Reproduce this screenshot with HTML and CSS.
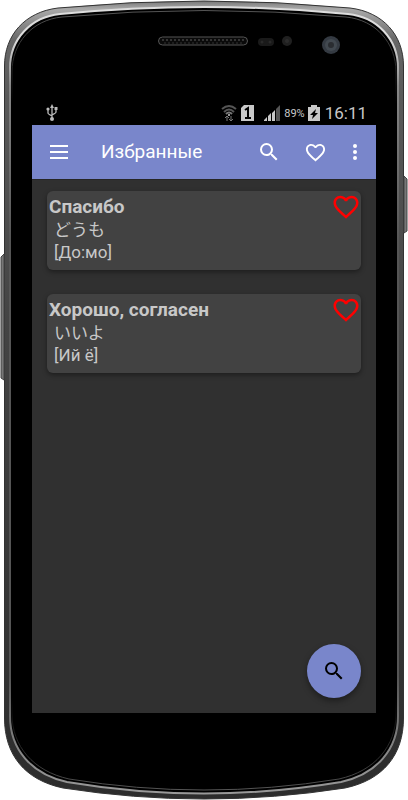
FILE: index.html
```html
<!DOCTYPE html>
<html lang="ru">

<head>
  <meta charset="UTF-8">
  <meta name="viewport" content="width=device-width, initial-scale=1.0">
  <title>Избранные</title>
  <link rel="stylesheet" href="styles.css">
</head>

<body>

  <div class="phone">
    <svg class="frame" viewBox="0 0 408 800" preserveAspectRatio="none" aria-hidden="true">
      <defs>
        <linearGradient id="rim" x1="0" y1="0" x2="0" y2="1">
          <stop offset="0" stop-color="#777" />
          <stop offset="0.01" stop-color="#aaa" />
          <stop offset="0.05" stop-color="#666" />
          <stop offset="0.12" stop-color="#5a5a5a" />
          <stop offset="0.4" stop-color="#444" />
          <stop offset="1" stop-color="#2c2c2c" />
        </linearGradient>
        <linearGradient id="shine" x1="0" y1="0" x2="0" y2="1">
          <stop offset="0" stop-color="#ddd" />
          <stop offset="0.04" stop-color="#ddd" />
          <stop offset="0.1" stop-color="#888" />
          <stop offset="0.3" stop-color="#555" />
          <stop offset="0.85" stop-color="#555" />
          <stop offset="0.95" stop-color="#888" />
          <stop offset="1" stop-color="#999" />
        </linearGradient>
        <linearGradient id="line" x1="0" y1="0" x2="0" y2="1">
          <stop offset="0" stop-color="#555" />
          <stop offset="0.08" stop-color="#222" />
          <stop offset="0.12" stop-color="#000" />
          <stop offset="0.88" stop-color="#000" />
          <stop offset="0.96" stop-color="#333" />
          <stop offset="1" stop-color="#555" />
        </linearGradient>
      </defs>
      <path fill="url(#rim)" stroke="#333" d="M4.500 66C4.500 35 25 12 58 8Q204-6 350 8C383 12 403.500 35 403.500 66V718C403.500 755 383 780 345 788Q204 810 63 788C25 780 4.500 755 4.500 718Z" />
      <path fill="#000" stroke="url(#shine)" stroke-width="2" d="M10 68C10 39 31 17 60 14Q204 0 348 14C377 17 398 39 398 68V716C398 749 377 774 341 782Q204 805 67 782C31 774 10 749 10 716Z" />
      <path fill="none" stroke="url(#line)" d="M12 72C12 43 32 20 62 17Q204 4 346 17C376 20 396 43 396 72V714C396 746 375 771 339 779Q204 801 69 779C33 771 12 746 12 714Z" />
      <!-- speaker -->
      <rect x="158.500" y="37" width="89" height="8" rx="4" fill="#0a0a0a" stroke="#555" />
      <path d="M162 40H245" stroke="#333" stroke-width="2" stroke-dasharray="2 2" />
      <path d="M164 43H243" stroke="#333" stroke-dasharray="2 2" />
      <!-- sensors -->
      <rect x="258" y="38" width="16" height="8" rx="4" fill="#1a1a1a" />
      <circle cx="262" cy="42" r="1.500" fill="#292929" />
      <circle cx="270" cy="42" r="1.500" fill="#292929" />
      <circle cx="287" cy="41" r="5" fill="#202020" />
      <circle cx="287" cy="41" r="2" fill="#2c2c2c" />
      <!-- camera -->
      <circle cx="331" cy="45" r="9" fill="#343a42" />
      <circle cx="331" cy="45" r="6" fill="#424950" />
      <circle cx="331" cy="45" r="3" fill="#2a2d31" />
      <!-- side keys -->
      <path d="M4 254L1 257V378L4 380Z" fill="#777" stroke="#444" />
      <path d="M404 176L407 179V231L404 233Z" fill="#777" stroke="#444" />
    </svg>

    <div class="screen">
      <div class="status-bar">
        <svg class="usb" width="12" height="18" viewBox="0 0 12 18">
          <g fill="none" stroke="#bbb" stroke-width="1.300">
            <path d="M6 2V15M2 6V9Q2 10 6 12M10 5V8Q10 9 6 11" />
          </g>
          <path d="M6 0L8 4H4ZM8.500 3h3v3h-3Z" fill="#bbb" />
          <circle cx="2" cy="5" r="1.600" fill="#bbb" />
          <circle cx="6" cy="15" r="2" fill="#bbb" />
        </svg>
        <svg class="wifi" width="16" height="18" viewBox="0 0 16 18">
          <g fill="none" stroke="#555" stroke-width="2">
            <path d="M1 5Q8-1 15 5M3 8Q8 3 13 8" />
            <path d="M5 10Q8 7 11 10" stroke="#777" />
          </g>
          <circle cx="8" cy="11" r="1" fill="#ccc" />
          <path d="M6 17V12M4 14L6 12L8 14M10 12V17M8 15L10 17L12 15" fill="none" stroke="#777" />
        </svg>
        <svg class="sim" width="13" height="16" viewBox="0 0 13 16">
          <path d="M3 0H13V16H0V3Z" fill="#c8c8c8" />
          <path d="M4 5L7 3V13M4 13H10" fill="none" stroke="#000" stroke-width="2" />
        </svg>
        <svg class="signal" width="16" height="16" viewBox="0 0 16 16">
          <path d="M0 16V15L3 12V16ZM4 16V11L7 8V16ZM8 16V8L11 5V16Z" fill="#c8c8c8" />
          <path d="M12 16V4L16 0V16Z" fill="#555" />
        </svg>
        <span class="percent">89%</span>
        <svg class="battery" width="12" height="16" viewBox="0 0 12 16">
          <path d="M3 0H9V2H12V16H0V2H3Z" fill="#c8c8c8" />
          <path d="M8 4L2 10H5L4 14L10 8H7Z" fill="#000" />
        </svg>
        <span class="clock">16:11</span>
      </div>

      <header class="app-bar">
        <button class="icon-btn menu" aria-label="Меню">
          <svg width="18" height="14" viewBox="0 0 18 14">
            <path d="M0 1H18M0 7H18M0 13H18" stroke="#fff" stroke-width="2" />
          </svg>
        </button>
        <h1 class="title">Избранные</h1>
        <button class="icon-btn" aria-label="Поиск">
          <svg width="24" height="24" viewBox="0 0 24 24" fill="#fff">
            <path d="M15.500 14h-.79l-.28-.27A6.470 6.470 0 0 0 16 9.500 6.500 6.500 0 1 0 9.500 16c1.610 0 3.090-.59 4.230-1.570l.27.28v.79l5 4.990L20.490 19l-4.990-5zm-6 0C7.010 14 5 11.990 5 9.500S7.010 5 9.500 5 14 7.010 14 9.500 11.990 14 9.500 14z" />
          </svg>
        </button>
        <button class="icon-btn" aria-label="Избранные">
          <svg width="23" height="23" viewBox="0 0 24 24" fill="#fff">
            <path d="M16.500 3c-1.740 0-3.410.81-4.500 2.090C10.910 3.810 9.240 3 7.500 3 4.420 3 2 5.420 2 8.500c0 3.780 3.400 6.860 8.550 11.540L12 21.350l1.450-1.320C18.600 15.360 22 12.280 22 8.500 22 5.420 19.580 3 16.500 3zm-4.400 15.550l-.1.100-.1-.1C7.140 14.240 4 11.390 4 8.500 4 6.500 5.500 5 7.500 5c1.540 0 3.040.99 3.570 2.360h1.870C13.460 5.990 14.960 5 16.500 5c2 0 3.500 1.500 3.500 3.500 0 2.890-3.140 5.740-7.900 10.050z" />
          </svg>
        </button>
        <button class="icon-btn more" aria-label="Ещё">
          <svg width="4" height="16" viewBox="0 0 4 16" fill="#fff">
            <circle cx="2" cy="2" r="2" />
            <circle cx="2" cy="8" r="2" />
            <circle cx="2" cy="14" r="2" />
          </svg>
        </button>
      </header>

      <main class="content">
        <article class="card">
          <div class="text">
            <h2 class="phrase">Спасибо</h2>
            <p class="japanese" lang="ja">どうも</p>
            <p class="reading">[До:мо]</p>
          </div>
          <button class="like" aria-label="Убрать из избранного">
            <svg width="30" height="30" viewBox="0 0 24 24" fill="#f00">
              <path d="M16.500 3c-1.740 0-3.410.81-4.500 2.090C10.910 3.810 9.240 3 7.500 3 4.420 3 2 5.420 2 8.500c0 3.780 3.400 6.860 8.550 11.540L12 21.350l1.450-1.320C18.600 15.360 22 12.280 22 8.500 22 5.420 19.580 3 16.500 3zm-4.400 15.550l-.1.100-.1-.1C7.140 14.240 4 11.390 4 8.500 4 6.500 5.500 5 7.500 5c1.540 0 3.040.99 3.570 2.360h1.870C13.460 5.990 14.960 5 16.500 5c2 0 3.500 1.500 3.500 3.500 0 2.890-3.140 5.740-7.900 10.050z" />
            </svg>
          </button>
        </article>
        <article class="card">
          <div class="text">
            <h2 class="phrase">Хорошо, согласен</h2>
            <p class="japanese" lang="ja">いいよ</p>
            <p class="reading">[Ий ё]</p>
          </div>
          <button class="like" aria-label="Убрать из избранного">
            <svg width="30" height="30" viewBox="0 0 24 24" fill="#f00">
              <path d="M16.500 3c-1.740 0-3.410.81-4.500 2.090C10.910 3.810 9.240 3 7.500 3 4.420 3 2 5.420 2 8.500c0 3.780 3.400 6.860 8.550 11.540L12 21.350l1.450-1.320C18.600 15.360 22 12.280 22 8.500 22 5.420 19.580 3 16.500 3zm-4.400 15.550l-.1.100-.1-.1C7.140 14.240 4 11.390 4 8.500 4 6.500 5.500 5 7.500 5c1.540 0 3.040.99 3.570 2.360h1.870C13.460 5.990 14.960 5 16.500 5c2 0 3.500 1.500 3.500 3.500 0 2.890-3.140 5.740-7.900 10.050z" />
            </svg>
          </button>
        </article>
      </main>

      <button class="fab" aria-label="Поиск">
        <svg width="24" height="24" viewBox="0 0 24 24" fill="#000">
          <path d="M15.500 14h-.79l-.28-.27A6.470 6.470 0 0 0 16 9.500 6.500 6.500 0 1 0 9.500 16c1.610 0 3.090-.59 4.230-1.570l.27.28v.79l5 4.990L20.490 19l-4.990-5zm-6 0C7.010 14 5 11.990 5 9.500S7.010 5 9.500 5 14 7.010 14 9.500 11.990 14 9.500 14z" />
        </svg>
      </button>
    </div>
  </div>

</body>

</html>
```
FILE: styles.css
```css
* {
  box-sizing: border-box;
}

body,
h1,
h2,
p {
  margin: 0;
}

body {
  background-color: #fff;
  font-family: Roboto, "Noto Sans CJK JP", sans-serif;
}

button {
  display: flex;
  align-items: center;
  justify-content: center;
  padding: 0;
  border: none;
  background: none;
  cursor: pointer;
}

svg {
  display: block;
  flex-shrink: 0;
}

.phone {
  position: relative;
  display: flex;
  min-height: 100vh;
  padding: 101px 32px 87px;
}

.frame {
  position: absolute;
  top: 0;
  left: 0;
  width: 100%;
  height: 100%;
}

.screen {
  position: relative;
  display: flex;
  flex: 1;
  flex-direction: column;
  background-color: #303030;
}

.status-bar {
  display: flex;
  align-items: center;
  height: 24px;
  padding: 0 9px 0 14px;
  background-color: #000;
  color: #c8c8c8;
}

.usb {
  margin-right: auto;
}

.sim {
  margin: 0 10px 0 4px;
}

.percent {
  margin: 0 3px 0 4px;
  font-size: 11px;
}

.clock {
  margin-left: 5px;
  font-size: 17px;
  line-height: 24px;
}

.app-bar {
  display: flex;
  align-items: center;
  height: 54px;
  padding: 0 9px 0 7px;
  background-color: #7986cb;
  color: #fff;
}

.icon-btn {
  width: 46px;
  height: 40px;
}

.menu {
  width: 40px;
}

.more {
  width: 24px;
  margin-left: 5px;
}

.title {
  flex: 1;
  padding-left: 22px;
  font-size: 19px;
  font-weight: 400;
  line-height: 24px;
}

.content {
  display: flex;
  flex: 1;
  flex-direction: column;
  gap: 24px;
  padding: 11px 15px;
  border-top: 1px solid #262626;
}

.card {
  display: flex;
  align-items: flex-start;
  justify-content: space-between;
  padding: 4px 0 7px 2px;
  border-radius: 6px;
  background-color: #424242;
  box-shadow: 0 2px 5px rgba(0, 0, 0, 0.4);
  color: #c8c8c8;
}

.phrase {
  font-size: 19px;
  font-weight: 700;
  line-height: 24px;
}

.japanese,
.reading {
  padding-left: 5px;
  font-size: 17px;
  line-height: 22px;
}

.like {
  width: 30px;
  height: 24px;
}

.fab {
  position: absolute;
  right: 15px;
  bottom: 15px;
  width: 54px;
  height: 54px;
  border-radius: 50%;
  background-color: #7986cb;
  box-shadow: 0 3px 6px rgba(0, 0, 0, 0.4);
}
```
